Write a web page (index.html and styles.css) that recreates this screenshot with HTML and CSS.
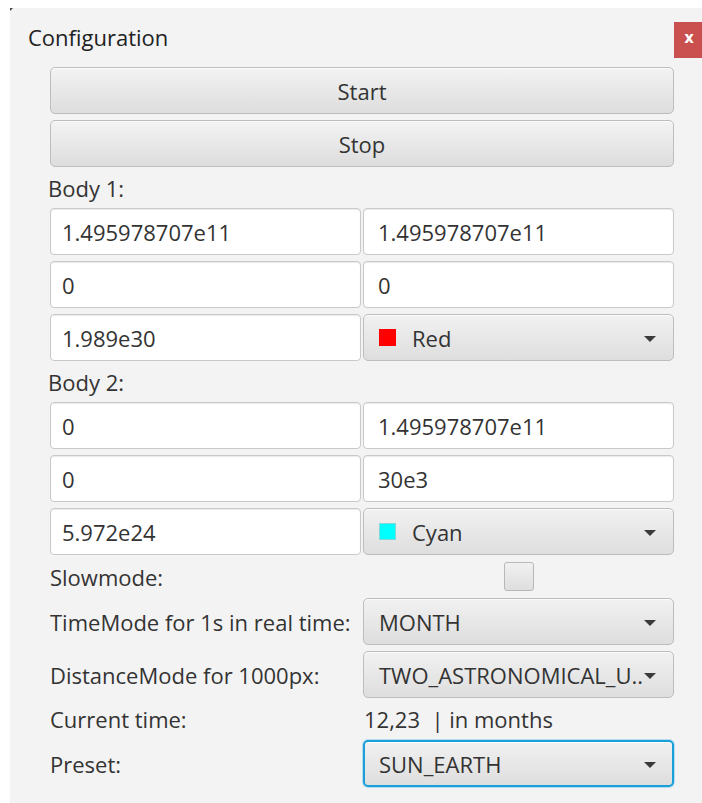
FILE: index.html
```html
<!DOCTYPE html>
<html lang="en">
<head>
<meta charset="utf-8">
<title>Configuration</title>
<link rel="stylesheet" href="styles.css">
</head>
<body>
<div class="window">
  <div class="titlebar">
    <span class="title">Configuration</span>
    <button class="close" type="button">x</button>
  </div>
  <div class="form">
    <button class="btn wide" type="button">Start</button>
    <button class="btn wide" type="button">Stop</button>

    <div class="label wide">Body 1:</div>
    <div class="field left">1.495978707e11</div>
    <div class="field right">1.495978707e11</div>
    <div class="field left">0</div>
    <div class="field right">0</div>
    <div class="field left">1.989e30</div>
    <div class="combo"><span class="swatch red"></span><span class="combo-text">Red</span><span class="arrow"></span></div>

    <div class="label wide">Body 2:</div>
    <div class="field left">0</div>
    <div class="field right">1.495978707e11</div>
    <div class="field left">0</div>
    <div class="field right">30e3</div>
    <div class="field left">5.972e24</div>
    <div class="combo"><span class="swatch cyan"></span><span class="combo-text">Cyan</span><span class="arrow"></span></div>

    <div class="label slow">Slowmode:</div>
    <div class="check-cell slow"><span class="checkbox"></span></div>

    <div class="label">TimeMode for 1s in real time:</div>
    <div class="combo"><span class="combo-text">MONTH</span><span class="arrow"></span></div>

    <div class="label">DistanceMode for 1000px:</div>
    <div class="combo"><span class="combo-text">TWO_ASTRONOMICAL_U..</span><span class="arrow"></span></div>

    <div class="label info">Current time:</div>
    <div class="value info">12,23&nbsp; | in months</div>

    <div class="label">Preset:</div>
    <div class="combo focused"><span class="combo-text">SUN_EARTH</span><span class="arrow"></span></div>
  </div>
</div>
</body>
</html>
```

FILE: styles.css
```css
html, body {
  margin: 0;
  padding: 0;
  background: #ffffff;
}

body {
  font-family: "Open Sans", "Noto Sans", sans-serif;
  font-size: 22px;
  color: #333333;
  overflow: hidden;
}

.window {
  position: relative;
  margin: 8px 0 0 10px;
  height: 795px;
  background: #f3f3f3;
}

/* small dark corner tick at the window's top-left */
.window::before {
  content: "";
  position: absolute;
  left: 0;
  top: 0;
  border-top: 3px solid #444;
  border-right: 3px solid transparent;
}

.titlebar {
  display: flex;
  justify-content: space-between;
  align-items: flex-start;
  height: 59px;
}

.title {
  margin: 14px 0 0 18px;
  font-size: 22px;
  color: #222;
  line-height: 30px;
}

.close {
  margin-top: 14px;
  width: 28px;
  height: 36px;
  border: none;
  padding: 0 0 4px 2px;
  background: #c9504f;
  color: #fff;
  font-family: "DejaVu Sans", sans-serif;
  font-weight: bold;
  font-size: 15px;
}

.form {
  display: grid;
  grid-template-columns: 311px 311px;
  column-gap: 2px;
  row-gap: 6px;
  margin-left: 40px;
}

.wide {
  grid-column: 1 / 3;
}

.btn {
  height: 47px;
  font-family: inherit;
  font-size: 22px;
  color: #333;
  border: 1px solid #bdbdbd;
  border-radius: 5px;
  background: linear-gradient(#f3f3f3, #dddddd);
  box-shadow: inset 0 1px 0 #fbfbfb;
  padding: 0;
}

.label {
  display: flex;
  align-items: center;
  color: #333;
  white-space: nowrap;
}

.label.wide {
  height: 29px;
  margin-left: -2px;
}

.field,
.combo {
  box-sizing: border-box;
  height: 47px;
  display: flex;
  align-items: center;
}

.field {
  background: #ffffff;
  border: 1px solid #c9c9c9;
  border-radius: 4px;
  box-shadow: inset 0 1px 1px #eaeaea;
}

.field.left {
  padding-left: 11px;
}

.field.right {
  padding-left: 14px;
}

.combo {
  position: relative;
  padding-left: 15px;
  border: 1px solid #bdbdbd;
  border-radius: 5px;
  background: linear-gradient(#f1f1f1, #dedede);
  box-shadow: inset 0 1px 0 #fbfbfb;
}

.combo.focused {
  border: 2px solid #1a9fd8;
  padding-left: 14px;
  box-shadow: 0 0 0 1px #b5def3, inset 0 1px 0 #fbfbfb;
}

.combo-text {
  white-space: nowrap;
}

.swatch {
  width: 17px;
  height: 17px;
  margin-right: 16px;
  flex: none;
}

.swatch.red {
  background: #ff0000;
}

.swatch.cyan {
  background: #00ffff;
  box-shadow: inset 0 0 0 1px #7fd9d9;
}

.arrow {
  position: absolute;
  right: 17px;
  top: 50%;
  margin-top: -2px;
  border-left: 6px solid transparent;
  border-right: 6px solid transparent;
  border-top: 6px solid #3a3a3a;
}

.combo.focused .arrow {
  right: 16px;
}

.slow {
  height: 31px;
}

.check-cell {
  display: flex;
  justify-content: center;
  align-items: center;
}

.checkbox {
  width: 30px;
  height: 29px;
  box-sizing: border-box;
  border: 1px solid #b8b8b8;
  border-radius: 3px;
  background: linear-gradient(#f1f1f1, #dedede);
}

.info {
  height: 30px;
}

.value {
  display: flex;
  align-items: center;
  padding-left: 1px;
  white-space: nowrap;
}
```
